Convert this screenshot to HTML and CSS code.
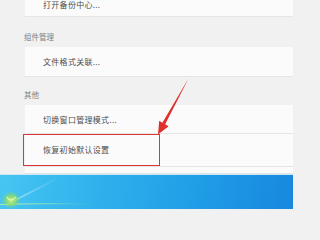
FILE: index.html
```html
<!DOCTYPE html>
<html lang="zh">
<head>
<meta charset="utf-8">
<link rel="stylesheet" href="styles.css">
</head>
<body>
<div class="panel">
  <div class="card card-first"><span class="item">打开备份中心...</span></div>
  <div class="label label-a">组件管理</div>
  <div class="card card-mid"><span class="item">文件格式关联...</span></div>
  <div class="label label-b">其他</div>
  <div class="card card-mid3"><span class="item">切换窗口管理模式...</span></div>
  <div class="card card-reset">
    <span class="item">恢复初始默认设置</span>
    <div class="mark-box"></div>
  </div>
  <div class="card card-tail"></div>
  <svg class="arrow" width="293" height="174" viewBox="0 0 293 174">
    <polygon points="188.5,78.5 165.2,124.3 168.6,126.2 158,134.5 159.2,120.8 162.4,122.7" fill="#e0302c"/>
  </svg>
</div>
<div class="desktop">
  <svg class="desk-art" width="293" height="34" viewBox="0 0 293 34">
    <defs>
      <radialGradient id="glow" cx="0.5" cy="0.5" r="0.5">
        <stop offset="0" stop-color="#c8f07a" stop-opacity="0.95"/>
        <stop offset="0.55" stop-color="#8fdc5a" stop-opacity="0.7"/>
        <stop offset="1" stop-color="#6fd0a0" stop-opacity="0"/>
      </radialGradient>
      <linearGradient id="streak" x1="0" y1="1" x2="1" y2="0">
        <stop offset="0" stop-color="#ffffff" stop-opacity="0.55"/>
        <stop offset="1" stop-color="#ffffff" stop-opacity="0"/>
      </linearGradient>
      <linearGradient id="baseline" x1="0" y1="0" x2="1" y2="0">
        <stop offset="0" stop-color="#b6f0a0" stop-opacity="0.9"/>
        <stop offset="1" stop-color="#b6f0a0" stop-opacity="0"/>
      </linearGradient>
    </defs>
    <path d="M6 30 L58 3" stroke="url(#streak)" stroke-width="1.6" fill="none"/>
    <path d="M0 29.5 Q40 28 95 29" stroke="url(#baseline)" stroke-width="1.2" fill="none"/>
    <ellipse cx="11" cy="25" rx="10" ry="9" fill="url(#glow)"/>
    <path d="M7 22 Q10 28 16 22" stroke="#e8ffb0" stroke-width="1.4" fill="none" opacity="0.8"/>
  </svg>
</div>
</body>
</html>
```

FILE: styles.css
```css
html, body {
  margin: 0;
  padding: 0;
  background: #f1f1f1;
}
body {
  width: 293px;
  height: 209px;
  overflow: hidden;
  font-family: "Noto Sans CJK SC", "Noto Sans", sans-serif;
}
.panel {
  display: flow-root;
  position: relative;
  height: 174px;
  padding-left: 24px;
  background: #f1f1f1;
  box-sizing: border-box;
}
.card {
  box-sizing: border-box;
  margin-left: 1px;
  background: #fbfbfb;
  border-bottom: 1px solid #e5e5e5;
  display: flex;
  align-items: center;
  padding-left: 18px;
  position: relative;
}
.item {
  font-size: 8px;
  line-height: 10px;
  color: #4d4d4d;
  letter-spacing: 0.3px;
  white-space: nowrap;
}
.card-first {
  margin-top: -14px;
  height: 31px;
  padding-top: 8px;
}
.card-mid {
  height: 30px;
}
.card-mid3 {
  height: 29px;
  padding-top: 1px;
}
.card-reset {
  height: 33px;
}
.card-tail {
  height: 7px;
  border-bottom: 1px solid #dde6ec;
}
.label {
  font-size: 7.5px;
  line-height: 10px;
  color: #808080;
  box-sizing: border-box;
}
.label-a {
  height: 30px;
  padding-top: 15px;
}
.label-b {
  height: 28px;
  padding-top: 13px;
}
.mark-box {
  position: absolute;
  left: -2px;
  top: 0;
  width: 137px;
  height: 32px;
  box-sizing: border-box;
  border: 1.5px solid #d8383a;
}
.arrow {
  position: absolute;
  left: 0;
  top: 0;
  pointer-events: none;
}
.desktop {
  position: relative;
  height: 35px;
  border-top: 1px solid #cfe6f3;
  background: linear-gradient(100deg, #45c6f2 0%, #2fb0ec 35%, #1f9be6 70%, #1788de 100%);
  overflow: hidden;
}
.desk-art {
  display: block;
}
```
